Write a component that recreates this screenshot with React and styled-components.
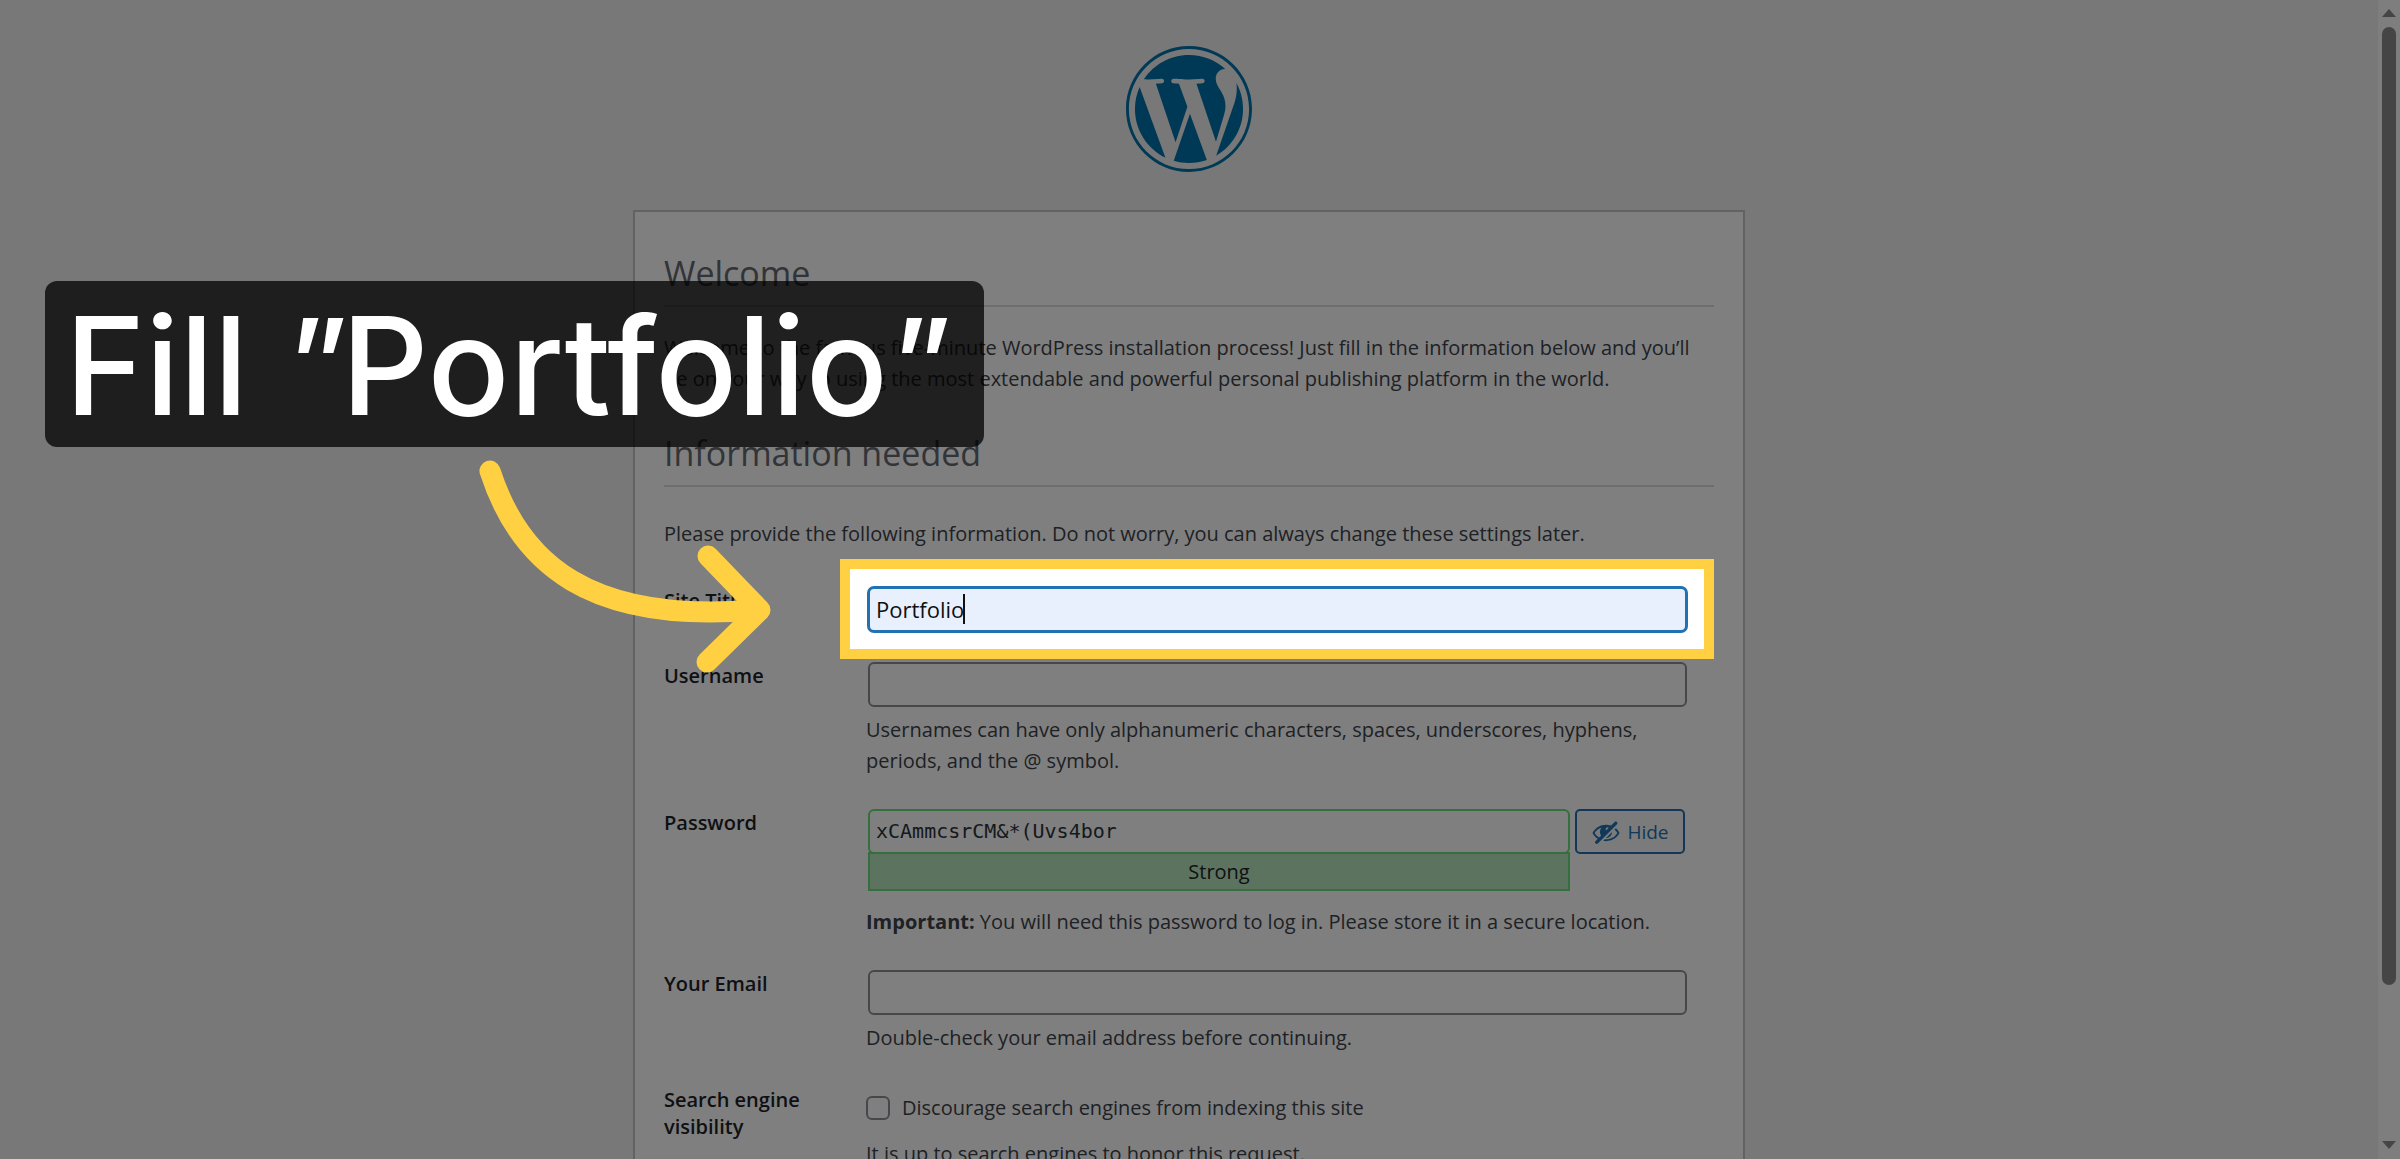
import React, { useState } from "react";
import styled, { createGlobalStyle } from "styled-components";

export default function App() {
  const [title, setTitle] = useState("Portfolio");
  const [username, setUsername] = useState("");
  const [password, setPassword] = useState("xCAmmcsrCM&*(Uvs4bor");
  const [email, setEmail] = useState("");
  const [hidden, setHidden] = useState(false);
  const [discourage, setDiscourage] = useState(false);

  return (
    <>
      <GlobalStyle />
      <Window>
        <Page>
          <Logo />
          <Card>
            <Heading>Welcome</Heading>
            <Intro>
              Welcome to the famous five-minute WordPress installation process!
              Just fill in the information below and you’ll be on your way to
              using the most extendable and powerful personal publishing
              platform in the world.
            </Intro>
            <Heading as="h2">Information needed</Heading>
            <Lead>
              Please provide the following information. Do not worry, you can
              always change these settings later.
            </Lead>
            <form onSubmit={(e) => e.preventDefault()}>
              <Row>
                <Label htmlFor="weblog_title">Site Title</Label>
                <Cell>
                  <FieldBox>
                    <TextInput
                      id="weblog_title"
                      type="text"
                      $focused
                      value={title}
                      onChange={(e) => setTitle(e.target.value)}
                    />
                    <Caret />
                    <Spotlight />
                    <Arrow />
                    <Callout>
                      Fill <Quote>"</Quote>Portfolio<Quote>"</Quote>
                    </Callout>
                  </FieldBox>
                </Cell>
              </Row>
              <Row>
                <Label htmlFor="user_login">Username</Label>
                <Cell>
                  <FieldBox>
                    <TextInput
                      id="user_login"
                      type="text"
                      value={username}
                      onChange={(e) => setUsername(e.target.value)}
                    />
                  </FieldBox>
                  <Hint>
                    Usernames can have only alphanumeric characters, spaces,
                    underscores, hyphens, periods, and the @ symbol.
                  </Hint>
                </Cell>
              </Row>
              <Row>
                <Label htmlFor="pass1">Password</Label>
                <Cell>
                  <PasswordLine>
                    <PasswordBox>
                      <PasswordInput
                        id="pass1"
                        type={hidden ? "password" : "text"}
                        value={password}
                        onChange={(e) => setPassword(e.target.value)}
                      />
                      <Strength>Strong</Strength>
                    </PasswordBox>
                    <HideButton type="button" onClick={() => setHidden(!hidden)}>
                      <HiddenIcon />
                      <span>{hidden ? "Show" : "Hide"}</span>
                    </HideButton>
                  </PasswordLine>
                  <Hint $spaced>
                    <strong>Important:</strong> You will need this password to
                    log in. Please store it in a secure location.
                  </Hint>
                </Cell>
              </Row>
              <Row>
                <Label htmlFor="admin_email">Your Email</Label>
                <Cell>
                  <FieldBox>
                    <TextInput
                      id="admin_email"
                      type="email"
                      value={email}
                      onChange={(e) => setEmail(e.target.value)}
                    />
                  </FieldBox>
                  <Hint>Double-check your email address before continuing.</Hint>
                </Cell>
              </Row>
              <Row>
                <Label htmlFor="blog_public">Search engine visibility</Label>
                <Cell>
                  <CheckLine>
                    <Checkbox
                      id="blog_public"
                      type="checkbox"
                      checked={discourage}
                      onChange={(e) => setDiscourage(e.target.checked)}
                    />
                    <label htmlFor="blog_public">
                      Discourage search engines from indexing this site
                    </label>
                  </CheckLine>
                  <Hint $spaced>
                    It is up to search engines to honor this request.
                  </Hint>
                </Cell>
              </Row>
            </form>
          </Card>
        </Page>
        <Scrollbar>
          <ScrollArrow />
          <Thumb />
          <ScrollArrow $down />
        </Scrollbar>
      </Window>
    </>
  );
}

function Logo() {
  return (
    <LogoLink href="#" aria-label="WordPress">
      <svg viewBox="0 0 122.52 122.523" width="126" height="126" fill="#0073aa">
        <path d="m8.708 61.26c0 20.802 12.089 38.779 29.619 47.298l-25.069-68.686c-2.916 6.536-4.55 13.769-4.55 21.388z" />
        <path d="m96.74 58.608c0-6.495-2.333-10.993-4.334-14.494-2.664-4.329-5.161-7.995-5.161-12.324 0-4.831 3.664-9.328 8.825-9.328.233 0 .454.029.681.042-9.35-8.566-21.807-13.796-35.489-13.796-18.36 0-34.513 9.42-43.91 23.688 1.233.037 2.395.063 3.382.063 5.497 0 14.006-.667 14.006-.667 2.833-.167 3.167 3.994.337 4.329 0 0-2.847.335-6.015.501l19.138 56.925 11.501-34.493-8.188-22.434c-2.83-.166-5.511-.501-5.511-.501-2.832-.166-2.5-4.496.332-4.329 0 0 8.679.667 13.843.667 5.496 0 14.006-.667 14.006-.667 2.835-.167 3.168 3.994.337 4.329 0 0-2.853.335-6.015.501l18.992 56.494 5.242-17.517c2.272-7.269 4.001-12.49 4.001-16.989z" />
        <path d="m62.184 65.857-15.768 45.819c4.708 1.384 9.687 2.141 14.846 2.141 6.12 0 11.989-1.058 17.452-2.979-.141-.225-.269-.464-.374-.724z" />
        <path d="m107.376 36.046c.226 1.674.354 3.471.354 5.404 0 5.333-.996 11.328-3.996 18.824l-16.053 46.413c15.624-9.111 26.133-26.038 26.133-45.426.001-9.137-2.333-17.729-6.438-25.215z" />
        <path d="m61.262 0c-33.779 0-61.262 27.481-61.262 61.26 0 33.783 27.483 61.263 61.262 61.263 33.778 0 61.265-27.48 61.265-61.263-.001-33.779-27.487-61.26-61.265-61.26zm0 119.715c-32.23 0-58.453-26.223-58.453-58.455 0-32.23 26.222-58.451 58.453-58.451 32.229 0 58.45 26.221 58.45 58.451 0 32.232-26.221 58.455-58.45 58.455z" />
      </svg>
    </LogoLink>
  );
}

function HiddenIcon() {
  return (
    <svg viewBox="0 0 20 20" width="30" height="30" fill="currentColor">
      <path d="M17.2 3.3l.16.17c.39.39.39 1.02 0 1.41L4.55 17.7c-.39.39-1.03.39-1.41 0l-.17-.17c-.39-.39-.39-1.02 0-1.41l1.59-1.6c-1.57-1-2.76-2.3-3.56-3.93.81-1.65 2.03-2.98 3.64-3.99S8.04 5.09 10 5.09c1.2 0 2.33.21 3.4.6l2.38-2.39c.39-.39 1.03-.39 1.42 0zm-7.09 4.01c-.23.25-.34.54-.34.88 0 .31.12.58.31.81l1.8-1.79c-.13-.12-.28-.21-.45-.26-.11-.01-.28-.03-.49-.04-.33.03-.6.16-.83.4zM2.4 10.59c.69 1.23 1.71 2.25 3.05 3.05l1.28-1.28c-.51-.69-.77-1.47-.77-2.36 0-1.06.36-1.98 1.09-2.76-1.04.27-1.96.7-2.76 1.26-.8.58-1.43 1.27-1.89 2.09zm13.22-2.13l.96-.96c1.02.86 1.83 1.89 2.42 3.09-.81 1.65-2.03 2.98-3.64 3.99s-3.4 1.51-5.36 1.51c-.63 0-1.24-.07-1.83-.18l1.07-1.07c.25.02.5.05.76.05 1.63 0 3.13-.4 4.5-1.21s2.4-1.84 3.1-3.09c-.46-.82-1.09-1.51-1.89-2.09-.03-.01-.06-.03-.09-.04zm-5.58 5.58l4-4c-.01 1.1-.41 2.04-1.18 2.81-.78.78-1.72 1.18-2.82 1.19z" />
    </svg>
  );
}

function Arrow() {
  return (
    <ArrowSvg viewBox="0 0 320 240" width="320" height="240">
      <path d="M21 22C51 115 121 175 286 161" />
      <path d="M239 107L291 161L238 213" />
    </ArrowSvg>
  );
}

const GlobalStyle = createGlobalStyle`
  * {
    box-sizing: border-box;
  }
  body {
    margin: 0;
    background: #f0f0f1;
    color: #3c434a;
    font-family: "Open Sans", "Noto Sans", sans-serif;
    font-size: 20px;
    line-height: 31px;
  }
`;

const Window = styled.div`
  display: flex;
  height: 100vh;
  overflow: hidden;
`;

const Page = styled.main`
  flex: 1;
  min-width: 0;
  padding: 46px 32px 0;
`;

const LogoLink = styled.a`
  display: block;
  width: 126px;
  height: 126px;
  margin: 0 auto 38px;
  svg {
    display: block;
  }
`;

const Card = styled.section`
  max-width: 1112px;
  margin: 0 auto;
  padding: 36px 29px;
  background: #fff;
  border: 2px solid #c3c4c7;
`;

const Heading = styled.h1`
  margin: 0 0 25px;
  padding-bottom: 7px;
  border-bottom: 2px solid #dcdcde;
  color: #646970;
  font-size: 34px;
  font-weight: 400;
  line-height: 50px;
`;

const Intro = styled.p`
  margin: 0 0 34px;
`;

const Lead = styled.p`
  margin: 31px 0 38px;
`;

const Row = styled.div`
  display: grid;
  grid-template-columns: 202px 1fr;
  padding: 0 27px 30px 0;
`;

const Label = styled.label`
  padding-right: 40px;
  color: #1d2327;
  font-weight: 600;
  line-height: 27px;
`;

const Cell = styled.div`
  min-width: 0;
`;

const FieldBox = styled.div`
  position: relative;
  margin-left: 2px;
`;

const TextInput = styled.input`
  display: block;
  width: 100%;
  height: 45px;
  padding: 0 6px 2px;
  border: 2px solid ${({ $focused }) => ($focused ? "#2271b1" : "#8c8f94")};
  border-radius: 6px;
  background: ${({ $focused }) => ($focused ? "#e8f0fe" : "#fff")};
  box-shadow: ${({ $focused }) => ($focused ? "0 0 0 1px #2271b1" : "none")};
  color: ${({ $focused }) => ($focused ? "#101010" : "#2c3338")};
  font-family: inherit;
  font-size: 22px;
  outline: none;
`;

const Caret = styled.span`
  position: absolute;
  top: 7px;
  left: 95px;
  width: 2px;
  height: 30px;
  background: #101010;
`;

/* the huge shadow dims everything around the highlighted field */
const Spotlight = styled.div`
  position: absolute;
  inset: -28px -27px -27px -28px;
  z-index: 1;
  border: 10px solid #ffd042;
  box-shadow: 0 0 0 4000px rgba(0, 0, 0, 0.5);
  pointer-events: none;
`;

const ArrowSvg = styled.svg`
  position: absolute;
  top: -138px;
  left: -399px;
  z-index: 3;
  fill: none;
  stroke: #ffd042;
  stroke-width: 21px;
  stroke-linecap: round;
  stroke-linejoin: round;
  pointer-events: none;
`;

const Callout = styled.div`
  position: absolute;
  top: -306px;
  left: -823px;
  z-index: 2;
  padding: 4px 39px 0 20px;
  border-radius: 12px;
  background: rgba(0, 0, 0, 0.75);
  color: #fff;
  font-family: Inter, sans-serif;
  font-size: 136px;
  font-weight: 500;
  line-height: 162px;
  white-space: nowrap;
`;

const Quote = styled.span`
  font-family: "Open Sans", sans-serif;
  font-style: italic;
  font-weight: 600;
  line-height: 1;
`;

const Hint = styled.p`
  margin: ${({ $spaced }) => ($spaced ? "15px" : "7px")} 0 3px;
  strong {
    font-weight: 700;
  }
`;

const PasswordLine = styled.div`
  display: flex;
  align-items: flex-start;
  gap: 5px;
  margin-left: 2px;
`;

const PasswordBox = styled.div`
  flex: 1;
  min-width: 0;
`;

const PasswordInput = styled(TextInput)`
  border-color: #68de7c;
  font-family: "DejaVu Sans Mono", monospace;
  font-size: 20px;
`;

const Strength = styled.div`
  position: relative;
  margin-top: -2px;
  border: 2px solid #68de7c;
  background: #b8e6bf;
  color: #1d2327;
  line-height: 35px;
  text-align: center;
`;

const HideButton = styled.button`
  display: flex;
  align-items: center;
  justify-content: center;
  gap: 6px;
  width: 110px;
  height: 45px;
  margin-right: 2px;
  padding: 0;
  border: 2px solid #2271b1;
  border-radius: 5px;
  background: #f6f7f7;
  color: #2271b1;
  font-family: inherit;
  font-size: 19px;
  cursor: pointer;
`;

const CheckLine = styled.div`
  display: flex;
  align-items: center;
  gap: 12px;
  padding-top: 6px;
`;

const Checkbox = styled.input`
  appearance: none;
  width: 24px;
  height: 24px;
  margin: 0;
  border: 2px solid #8c8f94;
  border-radius: 6px;
  background: #fff;
  &:checked {
    background: #2271b1;
  }
`;

const Scrollbar = styled.div`
  display: flex;
  flex-direction: column;
  align-items: center;
  width: 22px;
  padding: 9px 0 10px;
  background: #fcfcfc;
`;

const ScrollArrow = styled.span`
  width: 14px;
  height: 8px;
  margin-top: ${({ $down }) => ($down ? "auto" : "0")};
  background: #8b8b8b;
  clip-path: ${({ $down }) =>
    $down
      ? "polygon(0 0, 100% 0, 50% 100%)"
      : "polygon(50% 0, 100% 100%, 0 100%)"};
`;

const Thumb = styled.span`
  width: 14px;
  height: 84%;
  margin-top: 10px;
  border-radius: 7px;
  background: #8b8b8b;
`;
